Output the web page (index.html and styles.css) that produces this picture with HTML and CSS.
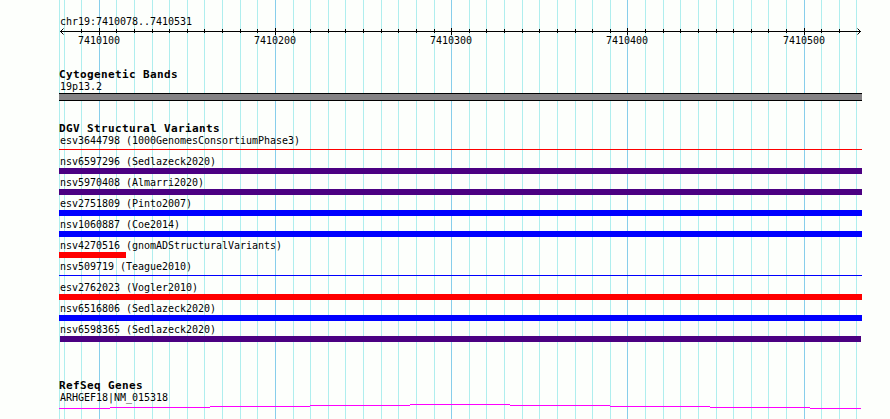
FILE: index.html
```
<!DOCTYPE html>
<html>
<head>
    <meta charset="utf-8">
    <title>chr19:7410078..7410531</title>
    <link rel="stylesheet" href="styles.css">
</head>
<body>
    <div class="panel">
        <!-- grid lines -->
        <svg class="grid" width="890" height="419">
            <path class="minor" d="M59.5 0v419M64.5 0v419M81.5 0v419M116.5 0v419M134.5 0v419M152.5 0v419M169.5 0v419M187.5 0v419M204.5 0v419M222.5 0v419M240.5 0v419M257.5 0v419M293.5 0v419M310.5 0v419M328.5 0v419M345.5 0v419M363.5 0v419M381.5 0v419M398.5 0v419M416.5 0v419M434.5 0v419M469.5 0v419M486.5 0v419M504.5 0v419M522.5 0v419M539.5 0v419M557.5 0v419M575.5 0v419M592.5 0v419M610.5 0v419M645.5 0v419M663.5 0v419M680.5 0v419M698.5 0v419M716.5 0v419M733.5 0v419M751.5 0v419M768.5 0v419M786.5 0v419M821.5 0v419M839.5 0v419M856.5 0v419"/>
            <path class="major" d="M99.5 0v419M275.5 0v419M451.5 0v419M627.5 0v419M804.5 0v419"/>
        </svg>

        <div class="tracks">
            <div class="position">chr19:7410078..7410531</div>
            <svg class="ruler" width="803" height="23" viewBox="59 27 803 23">
                <path class="axis" d="M60 31.5H861M81.5 29v4M116.5 29v4M134.5 29v4M152.5 29v4M169.5 29v4M187.5 29v4M204.5 29v4M222.5 29v4M240.5 29v4M257.5 29v4M293.5 29v4M310.5 29v4M328.5 29v4M345.5 29v4M363.5 29v4M381.5 29v4M398.5 29v4M416.5 29v4M434.5 29v4M469.5 29v4M486.5 29v4M504.5 29v4M522.5 29v4M539.5 29v4M557.5 29v4M575.5 29v4M592.5 29v4M610.5 29v4M645.5 29v4M663.5 29v4M680.5 29v4M698.5 29v4M716.5 29v4M733.5 29v4M751.5 29v4M768.5 29v4M786.5 29v4M821.5 29v4M839.5 29v4"/>
                <path class="axis" d="M99.5 28v7M275.5 28v7M451.5 28v7M627.5 28v7M804.5 28v7"/>
                <path class="arrow" d="M63.5 28.5l-3 3l3 3M857.5 28.5l3 3l-3 3"/>
                <text x="78" y="44">7410100</text>
                <text x="254" y="44">7410200</text>
                <text x="430" y="44">7410300</text>
                <text x="606" y="44">7410400</text>
                <text x="783" y="44">7410500</text>
            </svg>

            <div class="track cytoband">
                <h2>Cytogenetic Bands</h2>
                <div class="label">19p13.2</div>
                <div class="band"></div>
            </div>

            <div class="track variants">
                <h2>DGV Structural Variants</h2>
                <div class="label">esv3644798 (1000GenomesConsortiumPhase3)</div>
                <div class="bar thin red"></div>
                <div class="label">nsv6597296 (Sedlazeck2020)</div>
                <div class="bar purple"></div>
                <div class="label">nsv5970408 (Almarri2020)</div>
                <div class="bar purple"></div>
                <div class="label">esv2751809 (Pinto2007)</div>
                <div class="bar blue"></div>
                <div class="label">nsv1060887 (Coe2014)</div>
                <div class="bar blue"></div>
                <div class="label">nsv4270516 (gnomADStructuralVariants)</div>
                <div class="bar red short"></div>
                <div class="label">nsv509719 (Teague2010)</div>
                <div class="bar thin blue"></div>
                <div class="label">esv2762023 (Vogler2010)</div>
                <div class="bar red"></div>
                <div class="label">nsv6516806 (Sedlazeck2020)</div>
                <div class="bar blue"></div>
                <div class="label">nsv6598365 (Sedlazeck2020)</div>
                <div class="bar purple inset"></div>
            </div>

            <div class="track genes">
                <h2>RefSeq Genes</h2>
                <div class="label">ARHGEF18|NM_015318</div>
                <svg class="intron" width="803" height="5" viewBox="59 404 803 5">
                    <path d="M59 408.5h51M110 407.5h100M210 406.5h100M310 405.5h100M410 404.5h100M510 405.5h100M610 406.5h100M710 407.5h100M810 408.5h51"/>
                </svg>
            </div>
        </div>
    </div>
</body>
</html>
```
FILE: styles.css
```
body {
    margin: 0;
    background-color: #fdfffc;
    color: #000;
    font-family: "DejaVu Sans Mono", "Liberation Mono", monospace;
    font-size: 10px;
}

.panel {
    position: relative;
    width: 890px;
    height: 419px;
    overflow: hidden;
}

/* the grid lies behind all tracks */
.grid {
    position: absolute;
    top: 0;
    left: 0;
}

.grid path,
.axis,
.intron path {
    fill: none;
    stroke-width: 1;
    shape-rendering: crispEdges;
}

.grid .minor {
    stroke: #afeeee;
}

.grid .major {
    stroke: #87ceeb;
}

.tracks {
    position: relative;
    width: 803px;
    padding: 14px 0 0 59px;
}

.position,
.label {
    height: 13px;
    line-height: 13px;
    padding-left: 1px;
    letter-spacing: -0.02px;
    white-space: pre;
}

.position {
    line-height: 16px;
}

.label {
    padding-top: 2px;
}

.ruler,
.intron {
    display: block;
}

.ruler text {
    letter-spacing: -0.02px;
}

.axis {
    stroke: #000;
}

.arrow {
    fill: none;
    stroke: #000;
}

.track h2 {
    height: 14px;
    line-height: 16px;
    margin: 0 0 -3px;
    font-size: 11px;
    font-weight: bold;
    letter-spacing: 0.38px;
}

.cytoband {
    margin-top: 17px;
}

.variants {
    margin-top: 20px;
}

.genes {
    margin-top: 36px;
}

.band {
    height: 6px;
    border-top: 1px solid #000;
    border-bottom: 1px solid #000;
    background-color: #848284;
}

.bar {
    height: 6px;
}

.thin {
    height: 1px;
    margin: 2px 0 3px;
}

.red {
    background-color: #f00;
}

.blue {
    background-color: #00f;
}

.purple {
    background-color: #4b0082;
}

.short {
    width: 67px;
}

.inset {
    margin: 0 1px;
}

.intron path {
    stroke: #f0f;
}
```
